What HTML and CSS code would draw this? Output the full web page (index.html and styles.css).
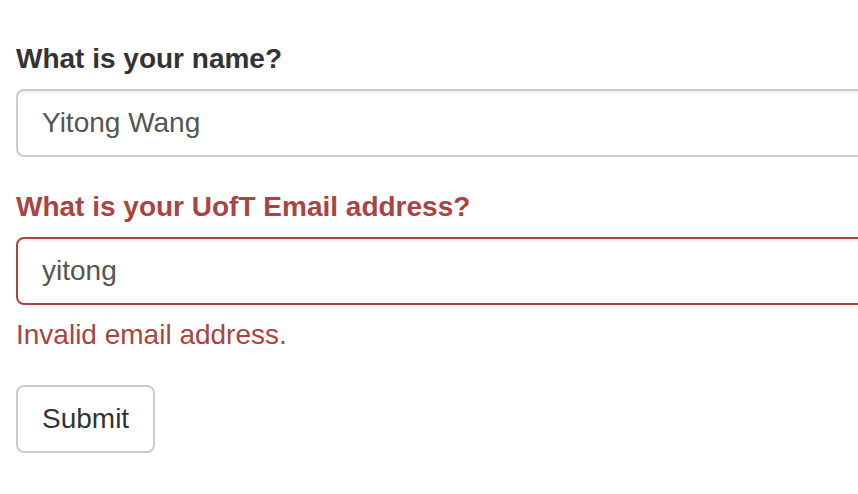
FILE: index.html
```html
<!DOCTYPE html>
<html lang="en">
<head>
<meta charset="utf-8">
<title>Form</title>
<link rel="stylesheet" href="styles.css">
</head>
<body>
<form class="form">
  <div class="form-group">
    <label class="control-label" for="name">What is your name?</label>
    <input class="form-control" id="name" type="text" value="Yitong Wang">
  </div>
  <div class="form-group has-error">
    <label class="control-label" for="email">What is your UofT Email address?</label>
    <input class="form-control" id="email" type="text" value="yitong">
    <span class="help-block">Invalid email address.</span>
  </div>
  <button class="btn" type="submit">Submit</button>
</form>
</body>
</html>
```
FILE: styles.css
```css
html {
  overflow: hidden;
}
body {
  margin: 0;
  padding: 39px 0 0 16px;
  font-family: "Liberation Sans", Arial, Helvetica, sans-serif;
  font-size: 28px;
  line-height: 40px;
  color: #333;
  background: #fff;
}
.form {
  width: 900px;
}
.form-group {
  margin-bottom: 30px;
}
.control-label {
  display: block;
  font-weight: bold;
  margin-bottom: 10px;
  line-height: 40px;
}
.form-control {
  display: block;
  box-sizing: border-box;
  width: 100%;
  height: 68px;
  margin: 0;
  padding: 12px 24px;
  font-family: inherit;
  font-size: 28px;
  line-height: 40px;
  color: #555;
  background: #fff;
  border: 2px solid #ccc;
  border-radius: 8px;
  box-shadow: inset 0 2px 2px rgba(0, 0, 0, 0.075);
  outline: none;
}
.has-error .control-label,
.has-error .help-block {
  color: #a94442;
}
.has-error .form-control {
  border-color: #a94442;
}
.help-block {
  display: block;
  margin-top: 10px;
  margin-bottom: 20px;
}
.btn {
  display: block;
  box-sizing: border-box;
  height: 68px;
  margin: 0;
  padding: 12px 24px;
  font-family: inherit;
  font-size: 28px;
  line-height: 40px;
  color: #333;
  background: #fff;
  border: 2px solid #ccc;
  border-radius: 8px;
  cursor: pointer;
}
```
